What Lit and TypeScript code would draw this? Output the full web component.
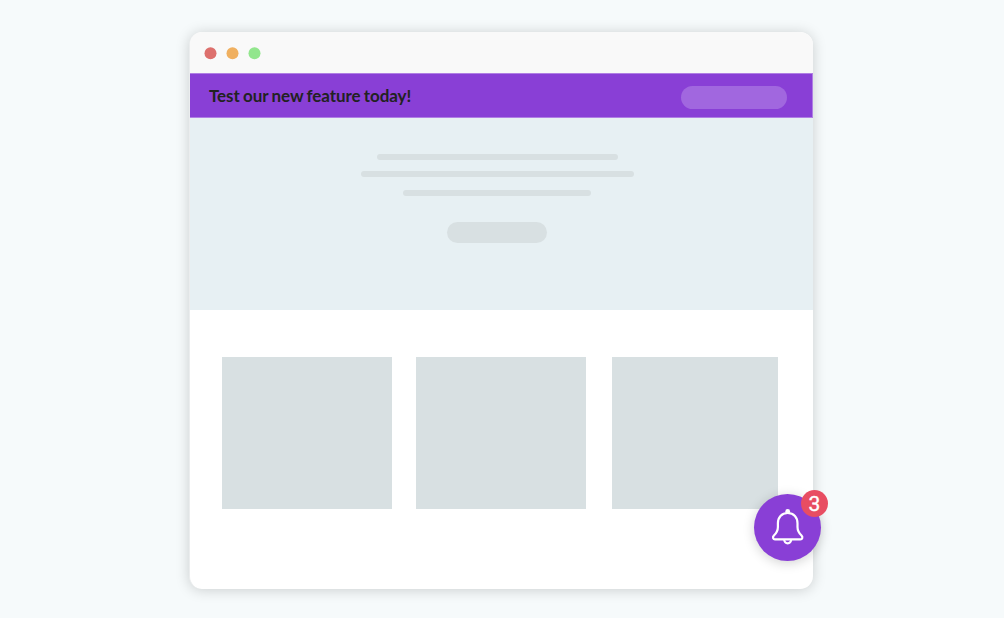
import { LitElement, html, css } from "lit";
import { customElement } from "lit/decorators.js";

@customElement("notification-bell")
class NotificationBell extends LitElement {
  static styles = css`
    :host { display: block; width: 67px; height: 67px; }
    .button {
      position: relative; width: 67px; height: 67px; border-radius: 50%;
      background: #893fd6; box-shadow: 0 2px 12px rgba(0, 0, 0, 0.18);
    }
    .icon { display: block; width: 67px; height: 67px; }
    .badge {
      position: absolute; left: 47px; top: -4px; width: 27px; height: 27px;
      border-radius: 50%; background: #e84d62; color: #fff;
      font: 400 21px/28px Roboto, sans-serif; text-align: center;
      -webkit-text-stroke: 0.4px #fff;
    }
  `;
  render() {
    return html`
      <div class="button">
        <svg class="icon" viewBox="0 0 67 67" fill="none" stroke="#fff" stroke-width="2.2" stroke-linejoin="round">
          <path d="M33.700 19c-6.200 0-9.800 4.300-9.800 10.300v3.700c0 4-1 5.700-4 8.500c-1.700 1.900-0.700 3.900 1.100 3.900h25.400c1.800 0 2.800-2 1.100-3.900c-3-2.800-4-4.500-4-8.500v-3.700c0-6-3.600-10.300-9.800-10.300z" />
          <path d="M30.200 45.500a3.500 3.800 0 0 0 7 0" />
          <circle cx="33.700" cy="17.500" r="2.400" fill="#fff" stroke="none" />
        </svg>
        <div class="badge">3</div>
      </div>
    `;
  }
}

@customElement("app-root")
class AppRoot extends LitElement {
  static styles = css`
    :host {
      display: block; box-sizing: border-box; width: 1004px; height: 618px;
      padding: 32px 0 0 189px; background: #f6fafb; overflow: hidden;
    }
    .window {
      box-sizing: border-box; position: relative; width: 624px; height: 557px;
      border-radius: 13px; border-left: 1px solid #ebedee;
      background: #fff; box-shadow: 0 1px 14px rgba(0, 0, 0, 0.18);
    }
    .titlebar {
      box-sizing: border-box; height: 41px; padding: 15px 0 0 14px;
      background: #f9f9f9; border-radius: 12px 13px 0 0;
    }
    .dots { display: block; width: 58px; height: 13px; }
    .banner {
      box-sizing: border-box; height: 45px; padding: 0 25px 0 19px;
      display: flex; align-items: center; justify-content: space-between;
      background: #893fd6; border: solid #b07fe4; border-width: 1px 1px 1px 0;
    }
    .message {
      margin-top: 1px; font: 700 17px/20px Lato, sans-serif;
      letter-spacing: -0.08px; word-spacing: -0.7px; color: #222; white-space: nowrap;
    }
    .action { width: 106px; height: 23px; margin-top: 3px; border-radius: 12px; background: #a167df; }
    .hero {
      box-sizing: border-box; height: 192px; padding: 36px 9px 0 0;
      display: flex; flex-direction: column; align-items: center; background: #e7f0f3;
    }
    .line { height: 6px; border-radius: 3px; background: #d8e0e2; }
    .first { width: 241px; }
    .second { width: 273px; margin-top: 11px; }
    .third { width: 188px; margin-top: 13px; }
    .pill { width: 100px; height: 21px; margin-top: 26px; border-radius: 11px; background: #d8e0e2; }
    .cards {
      display: grid; grid-template-columns: 170px 170px 166px;
      justify-content: start; padding: 47px 0 0 32px; column-gap: 24px;
    }
    .card { height: 152px; background: #d8e0e2; }
    .card:last-child { margin: 0 -2px 0 2px; }
    .bell { position: absolute; left: 564px; top: 462px; }
  `;
  render() {
    return html`
      <div class="window">
        <div class="titlebar">
          <svg class="dots" viewBox="0 0 58 13">
            <circle cx="6.500" cy="6.200" r="6" fill="#dd706d" />
            <circle cx="28.500" cy="6.200" r="6" fill="#f0b060" />
            <circle cx="50.500" cy="6.200" r="6" fill="#92e68d" />
          </svg>
        </div>
        <div class="banner">
          <div class="message">Test our new feature today!</div>
          <div class="action"></div>
        </div>
        <div class="hero">
          <div class="line first"></div>
          <div class="line second"></div>
          <div class="line third"></div>
          <div class="pill"></div>
        </div>
        <div class="cards">
          <div class="card"></div>
          <div class="card"></div>
          <div class="card"></div>
        </div>
        <notification-bell class="bell"></notification-bell>
      </div>
    `;
  }
}
